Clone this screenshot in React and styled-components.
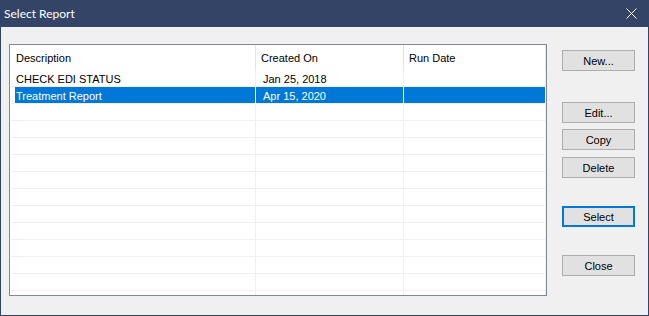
import React from "react";
import styled, { createGlobalStyle } from "styled-components";

const Global = createGlobalStyle`
  html, body { margin: 0; padding: 0; background: #f0f0f0; }
  body { width: 649px; height: 316px; overflow: hidden; }
`;

const Window = styled.div`
  width: 649px;
  height: 316px;
  box-sizing: border-box;
  border: 1px solid #344466;
  border-top: none;
  display: flex;
  flex-direction: column;
  background: #f0f0f0;
`;

const TitleBar = styled.div`
  height: 27px;
  flex: none;
  background: #344466;
  display: flex;
  align-items: center;
  justify-content: space-between;
  padding: 0 11px 0 3px;
  color: #ffffff;
  font-family: "Segoe UI", Lato, "Noto Sans", sans-serif;
  font-size: 12px;
`;

const CloseGlyph = styled.svg`
  width: 11px;
  height: 11px;
  display: block;
`;

const Body = styled.div`
  flex: 1;
  display: flex;
  align-items: flex-start;
  padding: 17px 0 0 8px;
  font-family: "Liberation Sans", Arial, sans-serif;
  font-size: 11px;
`;

const ListBox = styled.div`
  width: 538px;
  height: 252px;
  box-sizing: border-box;
  border: 1px solid #828790;
  background: #ffffff;
  overflow: hidden;
  flex: none;
`;

const Columns = styled.div`
  display: grid;
  grid-template-columns: 246px 148px 142px;
`;

const HeaderRow = styled(Columns)`
  height: 25px;
`;

const HeaderCell = styled.div`
  border-right: 1px solid #e5e5e5;
  padding-left: ${(p) => p.$pad}px;
  display: flex;
  align-items: center;
  color: #000;
  white-space: nowrap;
`;

const DataRow = styled(Columns)`
  height: 17px;
  box-sizing: border-box;
  border-bottom: 1px solid #f0f0f0;
  margin-left: 1px;
  width: 535px;
  grid-template-columns: 245px 148px 142px;
`;

const DataCell = styled.div`
  border-right: 1px solid ${(p) => (p.$selected ? "#ffffff" : "#f0f0f0")};
  background: ${(p) => (p.$selected ? "#0078d7" : "transparent")};
  box-shadow: ${(p) => (p.$selected && p.$first ? "inset 4px 0 0 #ffffff" : "none")};
  color: ${(p) => (p.$selected ? "#ffffff" : "#000000")};
  padding-left: ${(p) => p.$pad}px;
  line-height: 16px;
  padding-top: 1px;
  box-sizing: border-box;
  white-space: nowrap;
  overflow: hidden;
`;

const ButtonColumn = styled.div`
  display: flex;
  flex-direction: column;
  margin-left: 15px;
  padding-top: 6px;
`;

const DialogButton = styled.button`
  width: 73px;
  height: 21px;
  margin: ${(p) => p.$gap}px 0 0 0;
  padding: 0;
  box-sizing: border-box;
  border: ${(p) => (p.$focused ? "2px solid #0078d7" : "1px solid #adadad")};
  background: #e1e1e1;
  color: #000000;
  font-family: "Liberation Sans", Arial, sans-serif;
  font-size: 11px;
  outline: none;
  cursor: default;
`;

const rows = [
  { desc: "CHECK EDI STATUS", created: "Jan 25, 2018", run: "" },
  { desc: "Treatment Report", created: "Apr 15, 2020", run: "", selected: true },
];

const buttons = [
  { label: "New...", gap: 0 },
  { label: "Edit...", gap: 31 },
  { label: "Copy", gap: 6 },
  { label: "Delete", gap: 7 },
  { label: "Select", gap: 28, focused: true },
  { label: "Close", gap: 28 },
];

export default function App() {
  const filled = [...rows];
  while (filled.length < 14) filled.push({ desc: "", created: "", run: "" });
  return (
    <>
      <Global />
      <Window>
        <TitleBar>
          <span>Select Report</span>
          <CloseGlyph viewBox="0 0 11 11">
            <path d="M0.5 0.5 L10.5 10.5 M10.5 0.5 L0.5 10.5" stroke="#ffffff" strokeWidth="1" fill="none" />
          </CloseGlyph>
        </TitleBar>
        <Body>
          <ListBox>
            <HeaderRow>
              <HeaderCell $pad={6}>Description</HeaderCell>
              <HeaderCell $pad={5}>Created On</HeaderCell>
              <HeaderCell $pad={5}>Run Date</HeaderCell>
            </HeaderRow>
            {filled.map((r, i) => (
              <DataRow key={i}>
                <DataCell $first $selected={r.selected} $pad={5}>{r.desc}</DataCell>
                <DataCell $selected={r.selected} $pad={7}>{r.created}</DataCell>
                <DataCell $selected={r.selected} $pad={7}>{r.run}</DataCell>
              </DataRow>
            ))}
          </ListBox>
          <ButtonColumn>
            {buttons.map((b) => (
              <DialogButton key={b.label} $gap={b.gap} $focused={b.focused}>
                {b.label}
              </DialogButton>
            ))}
          </ButtonColumn>
        </Body>
      </Window>
    </>
  );
}
